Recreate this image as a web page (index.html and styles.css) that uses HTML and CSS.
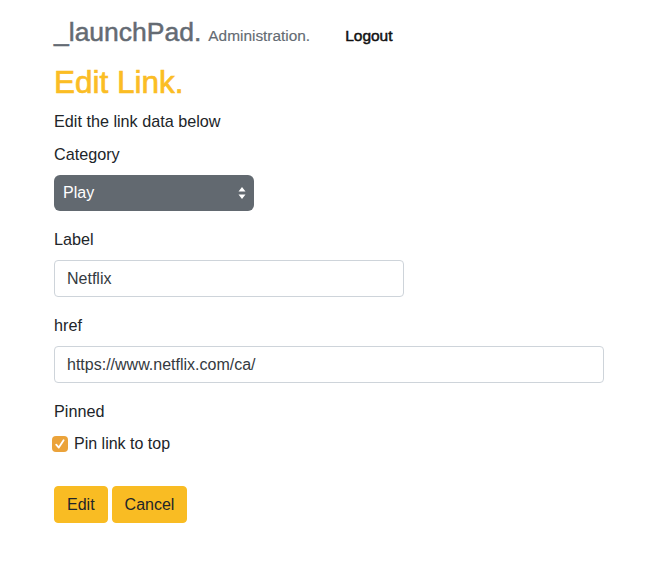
FILE: index.html
```html
<!DOCTYPE html>
<html lang="en">
<head>
<meta charset="utf-8">
<title>Edit Link</title>
<link rel="stylesheet" href="styles.css">
</head>
<body>
<div class="page">
  <nav class="nav">
    <span class="brand">_launchPad.</span>
    <span class="brand-sub">Administration.</span>
    <a class="logout" href="#">Logout</a>
  </nav>
  <h1 class="title">Edit Link.</h1>
  <p class="lead">Edit the link data below</p>
  <form class="form">
    <div class="group">
      <label class="label">Category</label>
      <div class="select">
        <span class="select-value">Play</span>
        <svg class="select-arrows" width="8" height="14" viewBox="0 0 8 14"><path d="M4 1 L7.5 5.5 H0.5 Z M4 13 L7.5 8.5 H0.5 Z" fill="#fff"/></svg>
      </div>
    </div>
    <div class="group">
      <label class="label">Label</label>
      <div class="input input-md">Netflix</div>
    </div>
    <div class="group">
      <label class="label">href</label>
      <div class="input input-lg">https://www.netflix.com/ca/</div>
    </div>
    <div class="group">
      <label class="label">Pinned</label>
      <div class="check-row">
        <span class="check"><svg width="16" height="16" viewBox="0 0 16 16"><path d="M4.2 8.6 L6.8 11.6 L11.6 4.2" fill="none" stroke="#fff" stroke-width="1.8" stroke-linecap="round" stroke-linejoin="round"/></svg></span>
        <span class="check-label">Pin link to top</span>
      </div>
    </div>
    <div class="actions">
      <button type="button" class="btn">Edit</button>
      <button type="button" class="btn">Cancel</button>
    </div>
  </form>
</div>
</body>
</html>
```

FILE: styles.css
```css
* { box-sizing: border-box; }
html, body { margin: 0; padding: 0; background: #fff; }
body {
  font-family: "Liberation Sans", Arial, sans-serif;
  font-size: 16px;
  line-height: 24px;
  color: #212529;
}
.page { padding: 17px 0 0 54px; }
.nav {
  display: flex;
  align-items: baseline;
  line-height: 31px;
}
.brand {
  font-size: 26.5px;
  color: #646b73;
  -webkit-text-stroke: 0.5px #646b73;
}
.brand-sub {
  font-size: 15.4px;
  color: #646b73;
  margin-left: 7px;
  -webkit-text-stroke: 0.15px #646b73;
}
.logout {
  margin-left: 35px;
  font-size: 15.5px;
  font-weight: 400;
  color: #111;
  text-decoration: none;
  -webkit-text-stroke: 0.5px #111;
}
.title {
  margin: 12px 0 0 0;
  font-size: 31.5px;
  line-height: 38px;
  font-weight: 400;
  color: #fbbd24;
  -webkit-text-stroke: 0.7px #fbbd24;
}
.lead { margin: 8px 0 9px 0; font-size: 16.2px; }
.group { margin-bottom: 16px; }
.label { display: block; margin-bottom: 9px; font-size: 16.2px; }
.select {
  width: 200px;
  height: 36px;
  background: #626970;
  border-radius: 6px;
  display: flex;
  align-items: center;
  justify-content: space-between;
  padding: 0 8px 0 9px;
  color: #fff;
}
.select-arrows { display: block; }
.input {
  height: 37px;
  border: 1px solid #ced4da;
  border-radius: 4px;
  padding: 0 12px;
  display: flex;
  align-items: center;
  color: #343a40;
}
.input-md { width: 350px; }
.input-lg { width: 550px; }
.check-row {
  display: flex;
  align-items: center;
  margin-left: -2px;
}
.check {
  width: 16px;
  height: 16px;
  border-radius: 4px;
  background: #eba33a;
  display: block;
  margin-right: 6px;
}
.check svg { display: block; }
.actions { padding-top: 14px; display: flex; gap: 4px; }
.btn {
  font-family: inherit;
  font-size: 16px;
  line-height: 22px;
  height: 37px;
  padding: 6px 12px;
  border: 1px solid #f9bc23;
  background: #f9bc23;
  color: #212529;
  border-radius: 4px;
}
```
